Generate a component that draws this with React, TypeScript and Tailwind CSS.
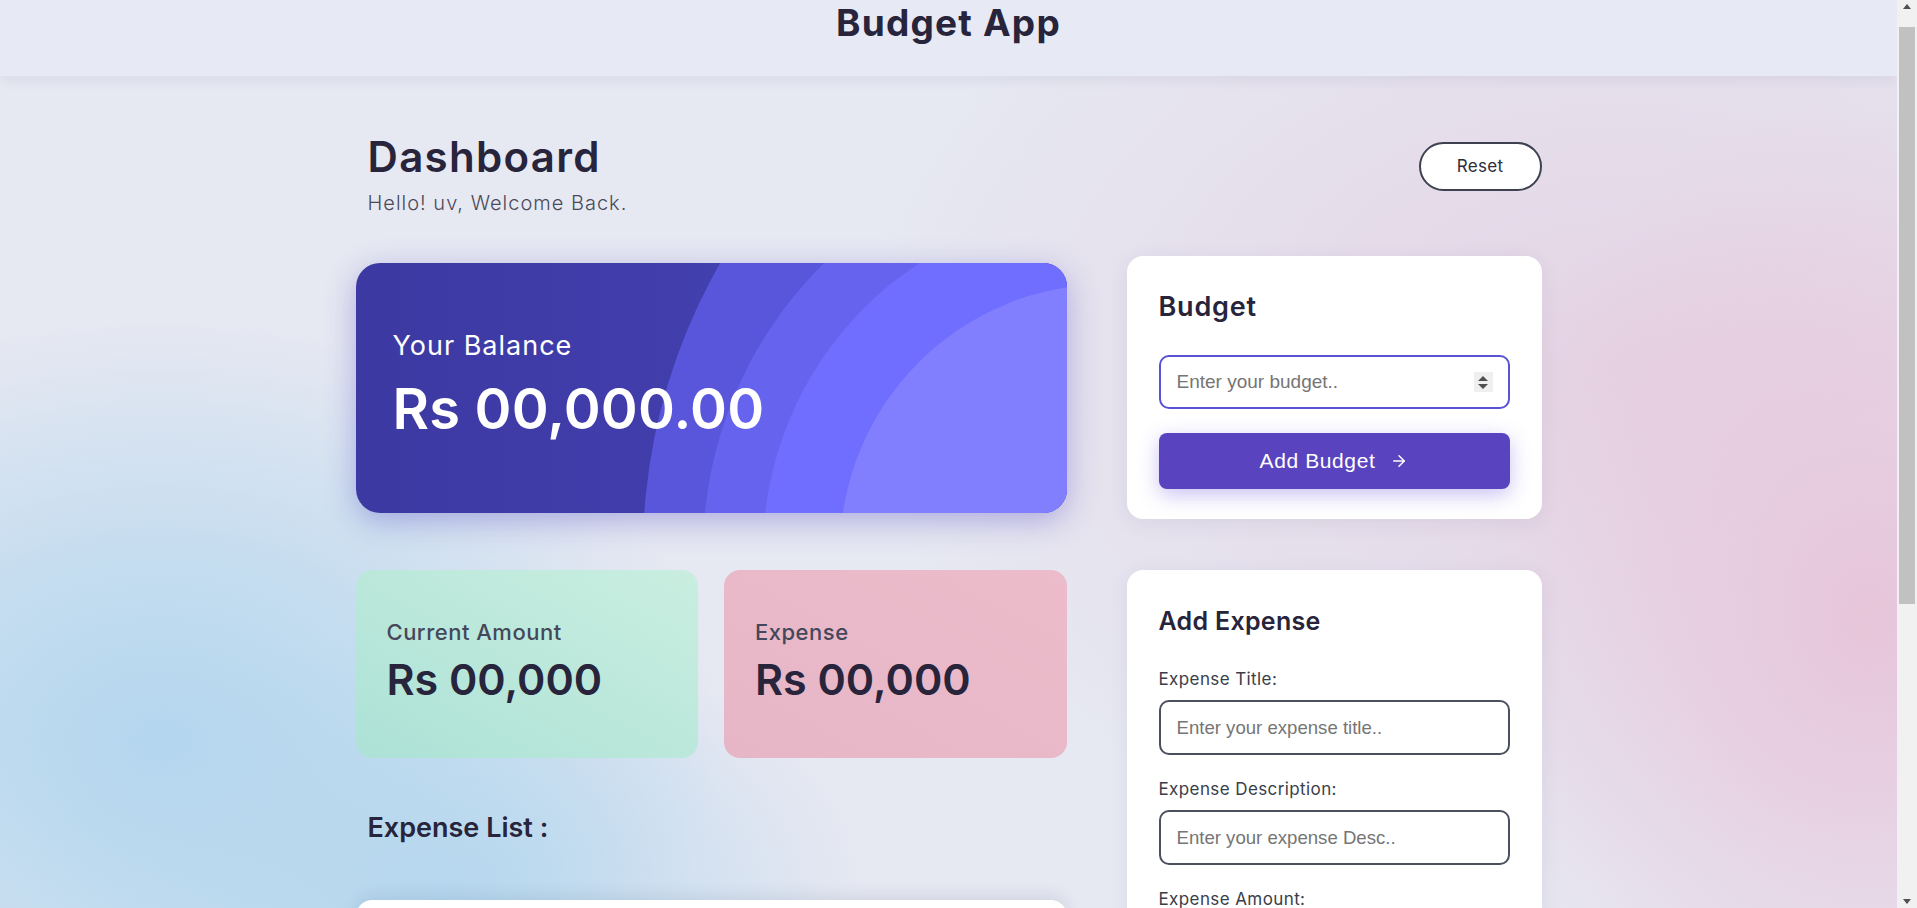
import React from "react";
import { ArrowRight } from "lucide-react";

const expenses = [
  { title: "Groceries", desc: "Weekly vegetables and fruits", amount: "Rs 2,400" },
  { title: "Electricity Bill", desc: "Monthly electricity charges", amount: "Rs 1,850" },
  { title: "Internet", desc: "Broadband recharge", amount: "Rs 999" },
  { title: "Fuel", desc: "Bike petrol refill", amount: "Rs 600" },
];

const inputCls =
  "w-full h-[55px] rounded-[10px] border-2 border-[#4a505e] bg-white px-[16px] font-['Liberation_Sans',Arial,sans-serif] text-[18.6px] text-[#222] placeholder:text-[#757575] outline-none";

const Field = ({ label, placeholder }: { label: string; placeholder: string }) => (
  <div className="flex flex-col">
    <label className="text-[17px] leading-[24px] tracking-[0.4px] text-[#3a3d4a]">{label}</label>
    <input type="text" placeholder={placeholder} className={`${inputCls} mt-[9px]`} />
  </div>
);

// browser-like scrollbar strip on the right
const ScrollBar = () => (
  <div className="sticky top-0 flex h-[908px] w-[20px] shrink-0 flex-col items-center bg-[#f1f1f1]">
    <span className="mt-[4px] h-0 w-0 border-x-[4px] border-b-[5px] border-x-transparent border-b-[#505050]" />
    <div className="mt-[18px] h-[577px] w-[16px] bg-[#c1c1c1]" />
    <div className="flex-1" />
    <span className="mb-[4px] h-0 w-0 border-x-[4px] border-t-[5px] border-x-transparent border-t-[#505050]" />
  </div>
);

export default function App() {
  return (
    <div className="flex w-full items-start bg-[#e6e8f2] font-['Inter',sans-serif] text-[#27243b]">
      <div className="min-h-screen min-w-0 flex-1 bg-[radial-gradient(560px_420px_at_160px_740px,#b3d6ee_0%,rgba(180,215,238,0.65)_45%,rgba(180,215,238,0)_100%),radial-gradient(420px_260px_at_440px_890px,#b6d7ee_0%,rgba(182,215,238,0)_100%),radial-gradient(420px_520px_at_1870px_620px,#e7c5da_0%,rgba(231,197,218,0.5)_50%,rgba(231,197,218,0)_100%),radial-gradient(760px_520px_at_1620px_360px,rgba(228,208,226,0.85)_0%,rgba(228,208,226,0)_100%)] bg-no-repeat">
        <header className="flex h-[76px] justify-center bg-[#e7e9f4] shadow-[0_4px_12px_rgba(40,40,80,0.07)]">
          <h1 className="text-[37px] font-bold leading-[46px] tracking-[1.2px]">Budget App</h1>
        </header>

        <main className="mx-auto w-[1186px] pt-[55px] pb-[60px]">
          <div className="flex items-start justify-between">
            <div className="pl-[12px]">
              <h2 className="text-[42px] font-semibold leading-[52px] tracking-[1.3px]">Dashboard</h2>
              <p className="mt-[6px] text-[20px] font-light leading-[28px] tracking-[1px] text-[#4a4a5a]">
                Hello! uv, Welcome Back.
              </p>
            </div>
            <button className="mt-[11px] h-[49px] w-[123px] rounded-full border-2 border-[#3d4150] bg-white text-[17px] tracking-[0.3px] text-[#2c2c3a]">
              Reset
            </button>
          </div>

          <div className="mt-[39px] flex items-start gap-[60px]">
            {/* left column */}
            <div className="w-[711px]">
              <div className="relative mt-[7px] h-[250px] overflow-hidden rounded-[24px] bg-[linear-gradient(90deg,#3c39a2,#4845ba)] shadow-[0_8px_30px_rgba(70,60,190,0.35)]">
                <svg className="absolute inset-0" width="711" height="250" viewBox="0 0 711 250">
                  <circle cx="866" cy="289" r="579" fill="#5956dc" />
                  <circle cx="752" cy="289" r="405" fill="#6663ee" />
                  <circle cx="752" cy="289" r="345" fill="#706efe" />
                  <circle cx="752" cy="289" r="268" fill="#817ffd" />
                </svg>
                <div className="relative pl-[37px] pt-[65px] text-white">
                  <p className="text-[27px] leading-[36px] tracking-[1px]">Your Balance</p>
                  <p className="mt-[13px] text-[56px] font-semibold leading-[64px] tracking-[0.2px]">Rs 00,000.00</p>
                </div>
              </div>

              <div className="mt-[57px] grid grid-cols-2 gap-[26px]">
                <div className="h-[188px] rounded-[16px] bg-[linear-gradient(to_top_right,#ade2d6,#c9eee0)] px-[31px] pt-[47px]">
                  <p className="text-[22px] font-medium leading-[30px] tracking-[0.5px] text-[#45475a]">Current Amount</p>
                  <p className="mt-[6px] text-[43px] font-semibold leading-[52px]">Rs 00,000</p>
                </div>
                <div className="h-[188px] rounded-[16px] bg-[linear-gradient(to_top_right,#e6b6c7,#ecbccb)] px-[31px] pt-[47px]">
                  <p className="text-[22px] font-medium leading-[30px] tracking-[0.5px] text-[#45475a]">Expense</p>
                  <p className="mt-[6px] text-[43px] font-semibold leading-[52px]">Rs 00,000</p>
                </div>
              </div>

              <h3 className="mt-[52px] pl-[12px] text-[27px] font-semibold leading-[36px]">Expense List :</h3>

              <div className="mt-[54px] rounded-[16px] bg-white px-[28px] py-[20px] shadow-[0_-4px_16px_rgba(60,80,110,0.12)]">
                {expenses.map((e) => (
                  <div key={e.title} className="flex items-center justify-between border-b border-[#e5e7eb] py-[28px] last:border-b-0">
                    <div>
                      <p className="text-[20px] font-semibold leading-[28px]">{e.title}</p>
                      <p className="mt-[4px] text-[15px] leading-[22px] text-[#5b5e6b]">{e.desc}</p>
                    </div>
                    <p className="text-[20px] font-semibold text-[#c2416b]">{e.amount}</p>
                  </div>
                ))}
              </div>
            </div>

            {/* right column */}
            <div className="flex w-[415px] flex-col gap-[51px]">
              <div className="rounded-[16px] bg-white px-[32px] pt-[31px] pb-[30px] shadow-[0_4px_20px_rgba(60,60,100,0.08)]">
                <h3 className="text-[27px] font-semibold leading-[40px] tracking-[0.8px]">Budget</h3>
                <div className="relative mt-[28px]">
                  <input
                    type="text"
                    placeholder="Enter your budget.."
                    className="h-[54px] w-full rounded-[10px] border-2 border-[#5a52d5] bg-white px-[16px] font-['Liberation_Sans',Arial,sans-serif] text-[19px] placeholder:text-[#757575] outline-none"
                  />
                  <span className="absolute right-[17px] top-[17px] flex h-[20px] w-[19px] flex-col items-center justify-center gap-[3px] bg-[#efefef]">
                    <span className="h-0 w-0 border-x-[5px] border-b-[5px] border-x-transparent border-b-[#4f4f4f]" />
                    <span className="h-0 w-0 border-x-[5px] border-t-[5px] border-x-transparent border-t-[#4f4f4f]" />
                  </span>
                </div>
                <button className="mt-[24px] flex h-[56px] w-full items-center justify-center gap-[15px] rounded-[8px] bg-[#5a43be] font-['Liberation_Sans',Arial,sans-serif] text-[21px] tracking-[0.6px] text-white shadow-[0_6px_20px_rgba(100,80,220,0.35)]">
                  Add Budget
                  <ArrowRight size={18} strokeWidth={2} />
                </button>
              </div>

              <div className="rounded-[16px] bg-white px-[32px] pt-[32px] pb-[32px] shadow-[0_4px_20px_rgba(60,60,100,0.08)]">
                <h3 className="text-[25px] font-semibold leading-[38px] tracking-[0.3px]">Add Expense</h3>
                <div className="mt-[27px] flex flex-col gap-[22px]">
                  <Field label="Expense Title:" placeholder="Enter your expense title.." />
                  <Field label="Expense Description:" placeholder="Enter your expense Desc.." />
                  <Field label="Expense Amount:" placeholder="Enter your expense amount.." />
                </div>
                <button className="mt-[28px] flex h-[56px] w-full items-center justify-center gap-[15px] rounded-[8px] bg-[#5a43be] font-['Liberation_Sans',Arial,sans-serif] text-[21px] tracking-[0.6px] text-white shadow-[0_6px_20px_rgba(100,80,220,0.35)]">
                  Add Expense
                  <ArrowRight size={18} strokeWidth={2} />
                </button>
              </div>
            </div>
          </div>
        </main>
      </div>
      <ScrollBar />
    </div>
  );
}
